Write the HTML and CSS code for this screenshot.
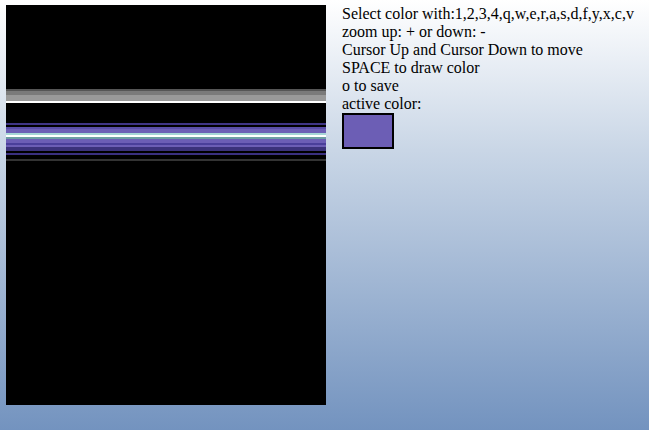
FILE: index.html
```html
<!DOCTYPE html>
<html>
<head>
<meta charset="utf-8">
<link rel="stylesheet" href="styles.css">
</head>
<body>
<div class="canvas">
  <div class="s" style="height:84px;background:#000"></div>
  <div class="s" style="height:2px;background:#555"></div>
  <div class="s" style="height:4px;background:#7a7a7a"></div>
  <div class="s" style="height:6px;background:#999"></div>
  <div class="s" style="height:2px;background:#fff"></div>
  <div class="s" style="height:20px;background:#000"></div>
  <div class="s" style="height:2px;background:#3f3585"></div>
  <div class="s" style="height:2px;background:#000"></div>
  <div class="s" style="height:2px;background:#5a4ea8"></div>
  <div class="s" style="height:4px;background:#6c5eb5"></div>
  <div class="s" style="height:2px;background:#a6d6d6"></div>
  <div class="s" style="height:2px;background:#fff"></div>
  <div class="s" style="height:2px;background:#6e9ea4"></div>
  <div class="s" style="height:4px;background:#6c5eb5"></div>
  <div class="s" style="height:2px;background:#4a3f9a"></div>
  <div class="s" style="height:2px;background:#6c5eb5"></div>
  <div class="s" style="height:4px;background:#3b327a"></div>
  <div class="s" style="height:2px;background:#000"></div>
  <div class="s" style="height:2px;background:#3a3080"></div>
  <div class="s" style="height:4px;background:#000"></div>
  <div class="s" style="height:2px;background:#333"></div>
</div>
<div class="info">
  <div>Select color with:1,2,3,4,q,w,e,r,a,s,d,f,y,x,c,v</div>
  <div>zoom up: + or down: -</div>
  <div>Cursor Up and Cursor Down to move</div>
  <div>SPACE to draw color</div>
  <div>o to save</div>
  <div>active color:</div>
  <div class="swatch"></div>
</div>
</body>
</html>
```
FILE: styles.css
```css
html {
  height: 100%;
  background: linear-gradient(to bottom, #ffffff 0%, #c9d6e6 35%, #7393bf 100%);
}
body {
  margin: 5px 6px;
  display: flex;
  gap: 16px;
  font-family: "Liberation Serif", "Times New Roman", serif;
  font-size: 16px;
  color: #000;
}
.canvas {
  width: 320px;
  height: 400px;
  background: #000;
  display: flex;
  flex-direction: column;
  flex-shrink: 0;
}
.s {
  flex-shrink: 0;
  width: 100%;
}
.info {
  display: flex;
  flex-direction: column;
  line-height: 18px;
}
.swatch {
  width: 48px;
  height: 32px;
  border: 2px solid #000;
  background: #6c5eb5;
}
```
